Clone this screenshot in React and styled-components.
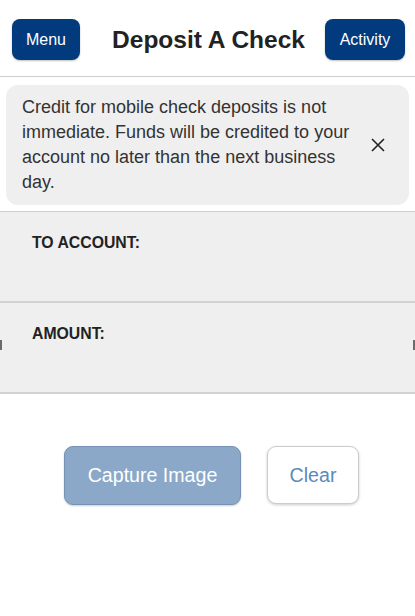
import * as React from 'react';
import styled, { createGlobalStyle } from 'styled-components';

const GlobalStyle = createGlobalStyle`
  html, body {
    margin: 0;
    padding: 0;
    background: #ffffff;
    font-family: "Liberation Sans", Arial, Helvetica, sans-serif;
  }
`;

const Page = styled.div`
  width: 415px;
  min-height: 616px;
  background: #ffffff;
  position: relative;
  overflow: hidden;
`;

const Header = styled.header`
  height: 77px;
  box-sizing: border-box;
  padding: 19px 10px 0 12px;
  display: grid;
  grid-template-columns: 1fr auto 1fr;
  align-items: start;
  border-bottom: 1px solid #cfcfcf;
`;

const NavButton = styled.button`
  justify-self: ${(p) => p.align};
  width: ${(p) => p.width}px;
  height: 41px;
  border: none;
  border-radius: 8px;
  background: #013b7d;
  color: #ffffff;
  font-family: inherit;
  font-size: 16px;
  padding: 0;
  box-shadow: 0 1px 2px rgba(0, 0, 0, 0.25);
`;

const Title = styled.h1`
  margin: 0;
  line-height: 41px;
  font-size: 24.5px;
  font-weight: bold;
  color: #222222;
`;

const NoticeWrap = styled.div`
  padding: 8px 6px 6px 6px;
  border-bottom: 1px solid #cfcfcf;
`;

const Notice = styled.div`
  background: #efefef;
  border-radius: 12px;
  padding: 10px 10px 10px 16px;
  display: flex;
  align-items: center;
`;

const NoticeText = styled.p`
  margin: 0;
  flex: 1;
  font-size: 18px;
  line-height: 25px;
  color: #333333;
  padding-right: 12px;
`;

const CloseButton = styled.button`
  border: none;
  background: transparent;
  padding: 0;
  margin-right: 14px;
  width: 14px;
  height: 14px;
  display: flex;
  align-items: center;
  justify-content: center;
`;

const Field = styled.div`
  height: 91px;
  box-sizing: border-box;
  background: #efefef;
  border-bottom: 2px solid #d2d2d2;
  padding: 22px 32px 0 32px;
  position: relative;
`;

const FieldLabel = styled.div`
  font-size: 15.8px;
  font-weight: bold;
  color: #222222;
`;

const Tick = styled.span`
  position: absolute;
  top: 37px;
  ${(p) => (p.side === 'left' ? 'left: 0;' : 'right: 0;')}
  width: 2px;
  height: 10px;
  background: #6b6b6b;
`;

const Actions = styled.div`
  display: flex;
  justify-content: center;
  gap: 26px;
  padding: 52px 0 0 8px;
`;

const CaptureButton = styled.button`
  width: 177px;
  height: 59px;
  border-radius: 9px;
  background: #8ba8c8;
  border: 1px solid #7592b6;
  color: #ffffff;
  font-family: inherit;
  font-size: 19.6px;
  box-shadow: 0 1px 2px rgba(0, 0, 0, 0.2);
`;

const ClearButton = styled.button`
  width: 92px;
  height: 58px;
  border-radius: 9px;
  background: #ffffff;
  border: 1px solid #cccccc;
  color: #5a89bd;
  font-family: inherit;
  font-size: 19.6px;
  box-shadow: 0 1px 3px rgba(0, 0, 0, 0.2);
`;

const App = () => {
  return (
    <Page>
      <GlobalStyle />
      <Header>
        <NavButton width={68} align="start">Menu</NavButton>
        <Title>Deposit A Check</Title>
        <NavButton width={80} align="end">Activity</NavButton>
      </Header>
      <NoticeWrap>
        <Notice>
          <NoticeText>
            Credit for mobile check deposits is not immediate. Funds will be credited to your
            account no later than the next business day.
          </NoticeText>
          <CloseButton aria-label="close">
            <svg width="14" height="14" viewBox="0 0 14 14">
              <path d="M1 1 L13 13 M13 1 L1 13" stroke="#222" strokeWidth="1.6" />
            </svg>
          </CloseButton>
        </Notice>
      </NoticeWrap>
      <Field>
        <FieldLabel>TO ACCOUNT:</FieldLabel>
      </Field>
      <Field>
        <FieldLabel>AMOUNT:</FieldLabel>
        <Tick side="left" />
        <Tick side="right" />
      </Field>
      <Actions>
        <CaptureButton>Capture Image</CaptureButton>
        <ClearButton>Clear</ClearButton>
      </Actions>
    </Page>
  );
};

export default App;
